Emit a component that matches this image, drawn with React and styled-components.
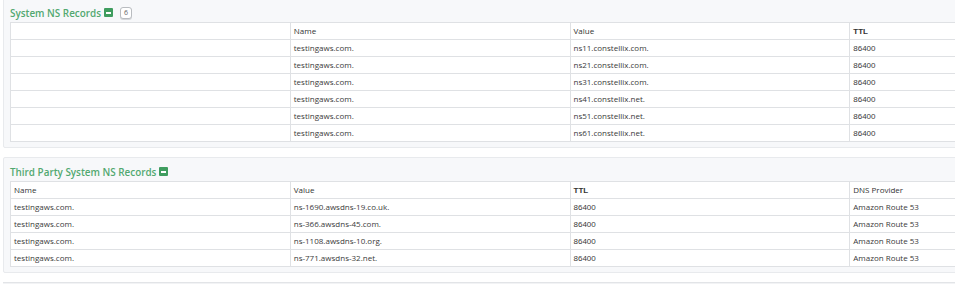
import React from 'react'
import styled, { createGlobalStyle } from 'styled-components'

const GlobalStyle = createGlobalStyle`
  html, body {
    margin: 0;
    padding: 0;
    background: #fff;
    overflow: hidden;
  }
  body {
    font-family: 'Open Sans', 'Liberation Sans', sans-serif;
  }
`

const Page = styled.div`
  display: flex;
  flex-direction: column;
  gap: 9px;
  width: 1150px;
  margin-top: -2px;
  padding-left: 3px;
`

const Panel = styled.section`
  background: #f7f8fa;
  border: 1px solid #e8eaed;
  border-radius: 2px;
  padding: 4px 6px 5px;
`

const EmptyPanel = styled.section`
  height: 12px;
  background: #f2f3f5;
  border-top: 1px solid #e2e4e7;
`

const Title = styled.h3`
  display: flex;
  align-items: center;
  gap: 3px;
  margin: 0;
  height: 19px;
  font-size: 9.9px;
  font-weight: 600;
  color: #52a870;
`

const Toggle = styled.span`
  display: inline-flex;
  align-items: center;
  justify-content: center;
  width: 9px;
  height: 9px;
  background: #3f9d5f;
  border-radius: 1px;

  &::after {
    content: '';
    width: 5px;
    height: 2px;
    background: #fff;
  }
`

const Badge = styled.span`
  display: inline-flex;
  align-items: center;
  justify-content: center;
  margin-left: 4px;
  width: 12px;
  height: 12px;
  box-sizing: border-box;
  border: 1px solid #b9bcc0;
  border-radius: 3px;
  background: #fff;
  box-shadow: 0 1px 0 #d6d8db;
  font-size: 7px;
  line-height: 1;
  font-weight: 400;
  color: #666;
`

const Table = styled.table`
  width: 1120px;
  border-collapse: collapse;
  table-layout: fixed;
  background: #fff;
  font-size: 8px;
  color: #3a3a3a;
`

const Cell = styled.td`
  height: 16px;
  box-sizing: border-box;
  padding: ${p => (p.$arial ? '2px 3px 0' : '0 3px')};
  border: 1px solid #dfe1e4;
  white-space: nowrap;
  text-align: left;
  vertical-align: middle;
  line-height: ${p => (p.$arial ? '14px' : '16px')};
  font-family: ${p => (p.$arial ? "'Liberation Sans', Arial, sans-serif" : "'Open Sans', sans-serif")};
  font-weight: ${p => (p.$head && p.$arial ? 700 : 400)};
  color: ${p => (p.$head ? '#333' : '#3a3a3a')};
`

const systemRecords = [
  ['testingaws.com.', 'ns11.constellix.com.', '86400'],
  ['testingaws.com.', 'ns21.constellix.com.', '86400'],
  ['testingaws.com.', 'ns31.constellix.com.', '86400'],
  ['testingaws.com.', 'ns41.constellix.net.', '86400'],
  ['testingaws.com.', 'ns51.constellix.net.', '86400'],
  ['testingaws.com.', 'ns61.constellix.net.', '86400'],
]

const thirdParty = [
  ['testingaws.com.', 'ns-1690.awsdns-19.co.uk.', '86400', 'Amazon Route 53'],
  ['testingaws.com.', 'ns-366.awsdns-45.com.', '86400', 'Amazon Route 53'],
  ['testingaws.com.', 'ns-1108.awsdns-10.org.', '86400', 'Amazon Route 53'],
  ['testingaws.com.', 'ns-771.awsdns-32.net.', '86400', 'Amazon Route 53'],
]

const App = () => (
  <Page>
    <GlobalStyle />
    <Panel>
      <Title>
        System NS Records <Toggle />
        <Badge>6</Badge>
      </Title>
      <Table>
        <thead>
          <tr>
            <Cell as="th" $head />
            <Cell as="th" $head>Name</Cell>
            <Cell as="th" $head>Value</Cell>
            <Cell as="th" $head $arial>TTL</Cell>
          </tr>
        </thead>
        <tbody>
          {systemRecords.map(([name, value, ttl]) => (
            <tr key={value}>
              <Cell />
              <Cell>{name}</Cell>
              <Cell>{value}</Cell>
              <Cell $arial>{ttl}</Cell>
            </tr>
          ))}
        </tbody>
      </Table>
    </Panel>
    <Panel>
      <Title>
        Third Party System NS Records <Toggle />
      </Title>
      <Table>
        <thead>
          <tr>
            <Cell as="th" $head>Name</Cell>
            <Cell as="th" $head>Value</Cell>
            <Cell as="th" $head $arial>TTL</Cell>
            <Cell as="th" $head>DNS Provider</Cell>
          </tr>
        </thead>
        <tbody>
          {thirdParty.map(([name, value, ttl, provider]) => (
            <tr key={value}>
              <Cell>{name}</Cell>
              <Cell>{value}</Cell>
              <Cell $arial>{ttl}</Cell>
              <Cell>{provider}</Cell>
            </tr>
          ))}
        </tbody>
      </Table>
    </Panel>
    <EmptyPanel />
  </Page>
)

export default App
